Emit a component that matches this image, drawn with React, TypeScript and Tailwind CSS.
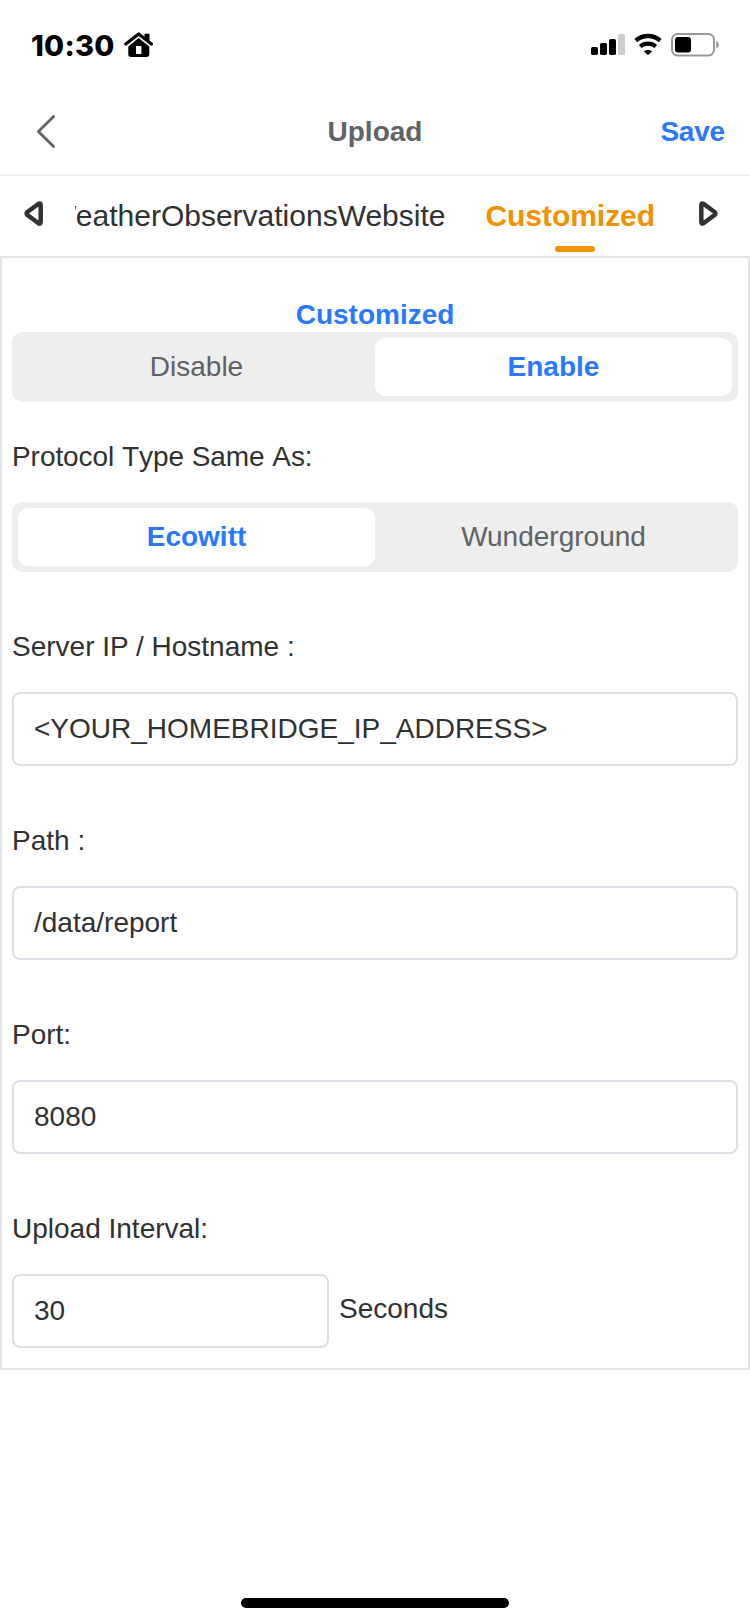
import React from 'react';

function StatusBar() {
  return (
    <div className="flex h-[88px] items-start justify-between pl-[31px] pr-[30px] text-black">
      <div className="flex pt-[25px]">
        <span className="w-[93px] pt-px whitespace-nowrap font-['Inter'] text-[29px] leading-[40px] font-extrabold tracking-[0.3px]">10:30</span>
        <svg className="mt-[7px]" width="29" height="26" viewBox="0 0 29 26">
          <path d="M1.8 11.9 L14.6 2 L27.4 11.9" fill="none" stroke="#000" strokeWidth="3.2" strokeLinecap="round" strokeLinejoin="round" />
          <path d="M20.5 1.8h5v9l-5-4z" fill="#000" />
          <path fillRule="evenodd" d="M14.6 6 L25.3 14.4 V22.3 Q25.3 25 22.6 25 H7 Q4.3 25 4.3 22.3 V14.4 Z M12 14 V22 H17.4 V14 Z" fill="#000" />
        </svg>
      </div>
      <div className="flex pt-[33px]">
        <svg width="34" height="23" viewBox="0 0 34 23">
          <rect x="0" y="14" width="7" height="8" rx="1.8" />
          <rect x="9" y="10" width="7" height="12" rx="1.8" />
          <rect x="18" y="6" width="7" height="16" rx="1.8" />
          <rect x="27" y="1" width="7" height="21" rx="1.8" fill="#cccccc" />
        </svg>
        <svg className="ml-[9px]" width="28" height="23" viewBox="0 0 28 23" fill="none" stroke="#000">
          <path d="M1.8 7.7 A18.3 18.3 0 0 1 26.2 7.7" strokeWidth="4.4" />
          <path d="M6.2 13.5 A12 12 0 0 1 21.8 13.5" strokeWidth="4.2" />
          <path d="M14 22.2 L9.9 18.2 A6.2 6.2 0 0 1 18.1 18.2 Z" fill="#000" stroke="none" />
        </svg>
        <svg className="ml-[9px]" width="49" height="24" viewBox="0 0 49 24">
          <rect x="1" y="1" width="42" height="21.5" rx="5.5" fill="none" stroke="#999" strokeWidth="2" />
          <rect x="4" y="4" width="16" height="15.5" rx="3" />
          <path d="M45.2 8 Q48 9 48 11.7 Q48 14.5 45.2 15.5 Z" fill="#999" />
        </svg>
      </div>
    </div>
  );
}

function Header() {
  return (
    <header className="flex h-[88px] items-center justify-between border-b-2 border-[#f0f0f5] pr-[25px] pl-[36px] text-[28px] leading-[40px] font-bold">
      <div className="flex w-[90px]">
        <svg width="20" height="36" viewBox="0 0 20 36">
          <path d="M17.6 3.6 L2.4 18.6 L17.6 33.6" fill="none" stroke="#606266" strokeWidth="2.8" strokeLinecap="round" strokeLinejoin="round" />
        </svg>
      </div>
      <h1 className="pt-[2px] text-[#606266]">Upload</h1>
      <button className="w-[101px] pt-[2px] text-right tracking-[-0.2px] text-[#2979ff]">Save</button>
    </header>
  );
}

function Tabs() {
  return (
    <nav className="flex h-[80px] items-start text-[30px] leading-[40px] text-[#303133]">
      <svg className="mt-[25px] ml-[24px] shrink-0" width="19" height="25" viewBox="0 0 19 25">
        <path d="M16.7 4.4 V20.6 Q16.7 23.6 14.2 22 L3.4 14 Q1.8 12.5 3.4 11 L14.2 3 Q16.7 1.4 16.7 4.4 Z" fill="none" stroke="#303133" strokeWidth="4.5" strokeLinejoin="round" />
      </svg>
      <div className="ml-[32px] flex h-[80px] w-[600px] justify-end overflow-hidden pt-[20px]">
        <span className="pr-[20px] whitespace-nowrap">WeatherObservationsWebsite</span>
        <div className="flex w-[210px] flex-col pr-[20px] pl-[20px]">
          <span className="font-bold tracking-[-0.05px] whitespace-nowrap text-[#f29100]">Customized</span>
          <span className="mt-[10px] ml-[70px] h-[6px] w-[40px] rounded-full bg-[#f29100]" />
        </div>
      </div>
      <svg className="mt-[25px] ml-[24px] shrink-0" width="19" height="25" viewBox="0 0 19 25">
        <path d="M2.3 4.4 V20.6 Q2.3 23.6 4.8 22 L15.6 14 Q17.2 12.5 15.6 11 L4.8 3 Q2.3 1.4 2.3 4.4 Z" fill="none" stroke="#303133" strokeWidth="4.5" strokeLinejoin="round" />
      </svg>
    </nav>
  );
}

function Segmented({ options, active }: { options: string[]; active: number }) {
  return (
    <div className="flex h-[70px] rounded-[10px] bg-[#eeeeee] p-[6px]">
      {options.map((option, i) => (
        <button
          key={option}
          className={
            i === active
              ? 'flex-1 rounded-[10px] bg-white leading-[58px] font-bold text-[#2979ff]'
              : 'flex-1 leading-[58px] text-[#606266]'
          }
        >
          {option}
        </button>
      ))}
    </div>
  );
}

function Field({ label, value, suffix }: { label: string; value: string; suffix?: string }) {
  return (
    <div className="flex h-[194px] flex-col pt-[55px]">
      <label>{label}</label>
      <div className="mt-[25px] flex">
        <div
          className={
            suffix
              ? 'h-[74px] w-[317px] rounded-[8px] border-2 border-[#dcdfe6] pt-[15px] pl-[20px]'
              : 'h-[74px] w-full rounded-[8px] border-2 border-[#dcdfe6] pt-[15px] pl-[20px]'
          }
        >
          {value}
        </div>
        {suffix && <span className="pt-[15px] pl-[10px]">{suffix}</span>}
      </div>
    </div>
  );
}

export default function App() {
  return (
    <div className="flex h-[1624px] w-[750px] flex-col bg-white font-['Liberation_Sans',Arial,sans-serif]">
      <StatusBar />
      <Header />
      <Tabs />
      <main className="h-[1114px] border-2 border-[#e4e4e4] px-[10px] pt-[37px] text-[28px] leading-[40px] text-[#303133]">
        <h2 className="h-[37px] text-center font-bold text-[#2979ff]">Customized</h2>
        <Segmented options={['Disable', 'Enable']} active={1} />
        <p className="pt-[35px] pb-[25px] tracking-[-0.06px] [font-kerning:none]">Protocol Type Same As:</p>
        <Segmented options={['Ecowitt', 'Wunderground']} active={0} />
        <Field label="Server IP / Hostname :" value="<YOUR_HOMEBRIDGE_IP_ADDRESS>" />
        <Field label="Path :" value="/data/report" />
        <Field label="Port:" value="8080" />
        <Field label="Upload Interval:" value="30" suffix="Seconds" />
      </main>
      <div className="mt-auto mb-[16px] h-[10px] w-[268px] self-center rounded-full bg-black" />
    </div>
  );
}
